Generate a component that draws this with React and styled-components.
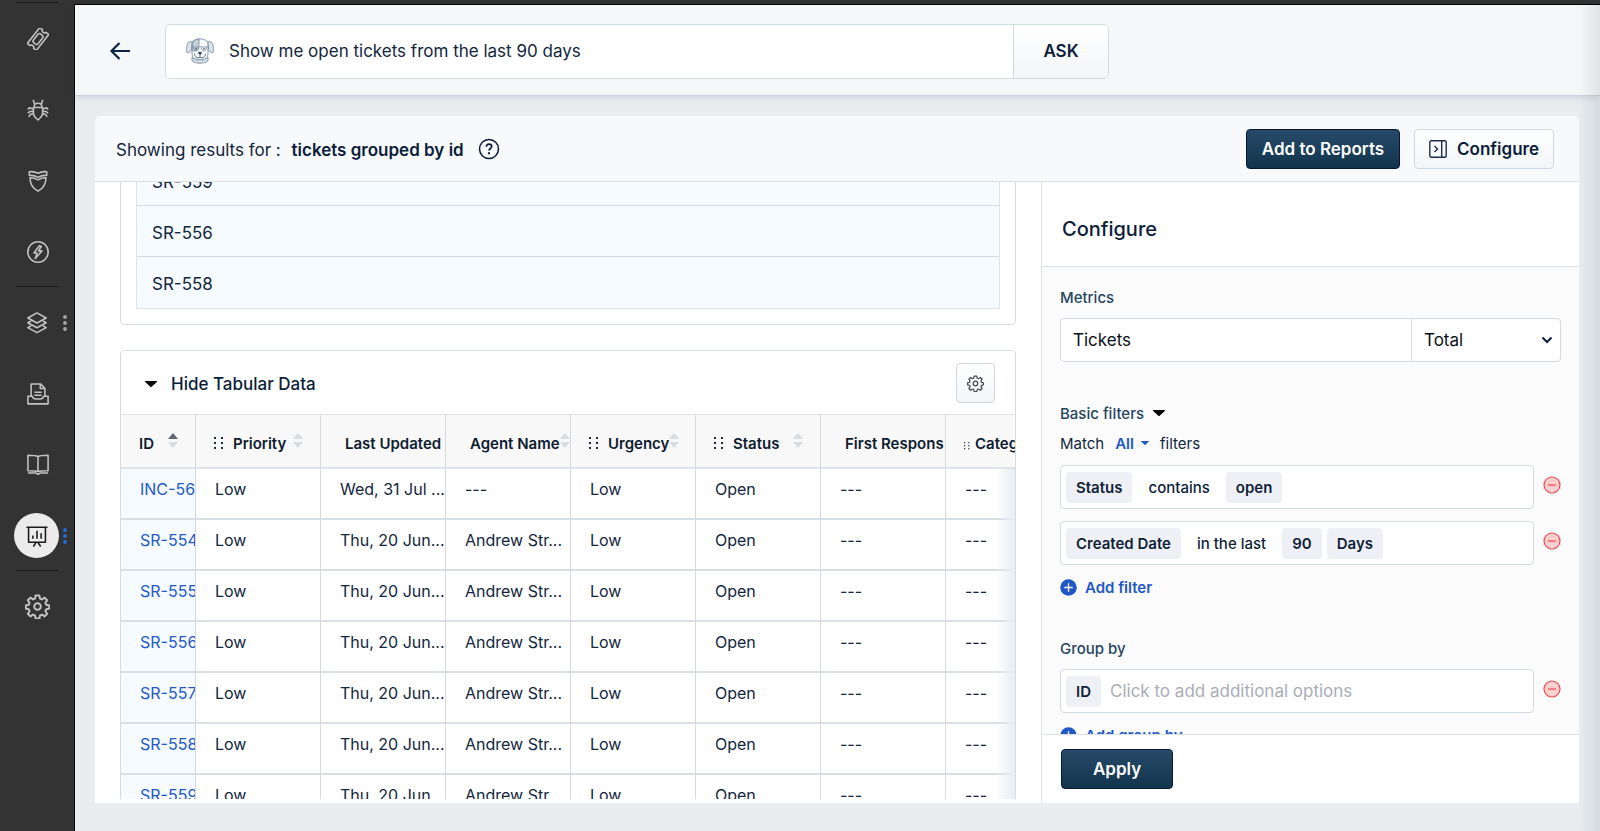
import React, { useLayoutEffect, useRef, useState } from "react";
import styled, { createGlobalStyle, css } from "styled-components";

const groupRows = ["SR-559", "SR-556", "SR-558"];

const columns = [
  { key: "id", label: "ID", width: 75, sort: "asc", pad: 18 },
  { key: "priority", label: "Priority", width: 125, grip: true, sort: "none", pad: 18 },
  { key: "updated", label: "Last Updated", width: 125, pad: 24 },
  { key: "agent", label: "Agent Name", width: 125, sort: "none", pad: 24 },
  { key: "urgency", label: "Urgency", width: 125, grip: true, sort: "none", pad: 18 },
  { key: "status", label: "Status", width: 125, grip: true, sort: "none", pad: 18 },
  { key: "response", label: "First Respons", width: 125, pad: 24 },
  { key: "category", label: "Category", width: 125, smallGrip: true, sort: "none", pad: 18 },
];

const makeTicket = (id, updated = "Thu, 20 Jun...", agent = "Andrew Str...") => ({
  id,
  priority: "Low",
  updated,
  agent,
  urgency: "Low",
  status: "Open",
  response: "---",
  category: "---",
});

const tickets = [
  makeTicket("INC-560", "Wed, 31 Jul ...", "---"),
  makeTicket("SR-554"),
  makeTicket("SR-555"),
  makeTicket("SR-556"),
  makeTicket("SR-557"),
  makeTicket("SR-558"),
  makeTicket("SR-559"),
  makeTicket("SR-560"),
  makeTicket("SR-561"),
];

const gearPath =
  "M10.2 1.5h3.6l.6 2.9 1.9.8 2.5-1.7 2.5 2.5-1.7 2.5.8 1.9 2.9.6v3l-2.9.6-.8 1.9 1.7 2.5-2.5 2.5-2.5-1.7-1.9.8-.6 2.9h-3.6l-.6-2.9-1.9-.8-2.5 1.7-2.5-2.5 1.7-2.5-.8-1.9-2.9-.6v-3l2.9-.6.8-1.9-1.7-2.5 2.5-2.5 2.5 1.7 1.9-.8z";

const GearIcon = ({ size, strokeWidth = 1.5 }) => (
  <Stroke width={size} height={size} viewBox="0 0 24 24" $weight={strokeWidth}>
    <path d={gearPath} />
    <circle cx="12" cy="12" r="3.2" />
  </Stroke>
);

const navItems = [
  {
    label: "Tickets",
    divider: true,
    icon: (
      <g transform="rotate(-52 12 12)">
        <path d="M1 5.800h22v3.700a2.600 2.600 0 0 0 0 5v3.700H1v-3.700a2.600 2.600 0 0 0 0-5z" />
        <rect x="6" y="8.800" width="12" height="6.400" rx="2" />
      </g>
    ),
  },
  {
    label: "Problems",
    icon: (
      <>
        <path d="M7 9.200h10v6.300c0 3-2.400 5.200-5 7.300-2.600-2.100-5-4.300-5-7.300z" />
        <path d="M7.500 9c.3-2.700 1.900-4.300 4.500-4.300s4.200 1.600 4.500 4.300" />
        <path d="M7 .800c0 2.300.6 4 2.200 4.600M17 .800c0 2.300-.6 4-2.200 4.600" />
        <path d="M7 11 2.500 9.500 1 11.500M7 13.500l-4 .2-2 1.800M7 16l-3.500 1L2 19.500M17 11l4.500-1.500 1.500 2M17 13.500l4 .2 2 1.800M17 16l3.500 1 1.500 2.500" />
      </>
    ),
  },
  {
    label: "Changes",
    icon: (
      <>
        <path d="M2.500 2c3.300-.6 6.500 0 9.500 1.500 3-1.500 6.200-2.100 9.500-1.500v4c-3.400-.5-6.500.3-9.500 2-3-1.700-6.100-2.500-9.500-2z" />
        <path d="M3.300 8.500c3-.2 6 .7 8.700 2.200 2.700-1.500 5.700-2.400 8.700-2.200 0 6.300-3 11.800-8.700 14.600-5.700-2.800-8.700-8.300-8.700-14.600z" />
      </>
    ),
  },
  {
    label: "Releases",
    icon: (
      <>
        <circle cx="12" cy="12" r="11.100" />
        <path d="m13.800 5-6.300 8h3.500L9 19.200l7.300-8.400h-3.700L15.500 6z" />
      </>
    ),
  },
  {
    label: "Assets",
    divider: true,
    dots: true,
    shift: true,
    icon: (
      <>
        <path d="m12 1 10 5.500-10 5.500L2 6.500z" />
        <path d="M5.500 9.800 2 11.700l10 5.500 10-5.500-3.500-1.900" />
        <path d="M5.500 15 2 17l10 5.500L22 17l-3.500-2" />
      </>
    ),
  },
  {
    label: "Requests",
    icon: (
      <>
        <path d="M4.500 14.500V1h10.200l4.800 4.800v8.700M14.500 1.300v4.700h4.800" />
        <path d="M1 14.500h4.700c.6 2 2 3 4 3h4.600c2 0 3.400-1 4-3H23v8.300H1z" />
        <path d="M8 10h8M8 13.300h8" />
      </>
    ),
  },
  {
    label: "Solutions",
    icon: (
      <>
        <path d="M12 2.800C9.800 1.300 6 1.300 1 1.300v16.900c5 0 8.800 0 11 1 2.200-1 6-1 11-1V1.300c-5 0-8.800 0-11 1.500zM12 2.800v16.300" />
        <path d="M1 20.800h8.700l2.300 1.500 2.300-1.500H23" />
      </>
    ),
  },
  {
    label: "Analytics",
    active: true,
    dots: true,
    shift: true,
    icon: (
      <>
        <path d="M.5 2.500h23M2.800 3v15.800h18.400V3" />
        <path d="M7.500 11.500V15M12 6.300V15M16.500 9v6M11 19l-3 4.500M13 19l3 4.500" />
      </>
    ),
  },
  { label: "Admin", divider: true, gear: true },
];

const DogIcon = () => (
  <svg width="28" height="26" viewBox="0 0 28 26" fill="none" stroke="#7f92a3" strokeWidth=".9">
    <path d="M6 4C8 2 11 .8 14 .8S20 2 22 4v11c0 5-3 8.500-8 8.500S6 20 6 15z" fill="#f8fafb" />
    <path d="M7 3.500c2-1.800 4-2.500 6-2.500-.2 3 .3 6.500-.8 9.500-1.500 2.500-4 3-6.200 2z" fill="#c5cfd8" />
    <path d="M6 4C3.800 3 2.200 3.800 1.300 6.500.700 9 .300 12 .800 14.300c2.500 1 4-.8 4.600-3.300z" fill="#dde3e9" />
    <path d="M22 4c2.200-1 3.800-.2 4.700 2.500.6 2.500 1 5.500.5 7.800-2.500 1-4-.8-4.600-3.300z" fill="#dde3e9" />
    <path d="M6.500 9h6c1-.5 2-.5 3 0h6M7.500 9.200c0 2.500 1 3.600 2.600 3.600s2.500-1.200 2.700-3.400M15.200 9.400c.2 2.200 1.100 3.400 2.700 3.400s2.600-1.100 2.600-3.600" />
    <path d="M9 10.800h2M17 10.800h2" stroke="#2f4559" />
    <path d="M12.300 14.700c1-.5 2.400-.5 3.400 0L14 16.800z" fill="#2f4559" stroke="#2f4559" />
    <path d="M14 17v2.300M8.500 15.500c0 3.500 3 5 5.500 3.800 2.500 1.200 5.500-.3 5.500-3.800" stroke="#4c6276" />
    <path d="M6 19c3 3.300 13 3.300 16 0v3.800c-3 3.200-13 3.200-16 0z" fill="#d3dbe1" />
    <path d="M11 22.500h1M16 22.500h1" />
  </svg>
);

const SortArrows = ({ active }) => (
  <SortSvg width="10" height="15" viewBox="0 0 10 15">
    <path d="M5 0l5 6H0z" fill={active ? "#5f6670" : "#d8dde2"} />
    <path d="M5 15l5-6H0z" fill="#d8dde2" />
  </SortSvg>
);

const Grip = ({ small }) => (
  <GripSvg
    width={small ? 6 : 10}
    height={small ? 8 : 13}
    viewBox="0 0 10 13"
    fill="#1d2c3f"
    $small={small}
  >
    {[0, 5, 10].map((y) => (
      <React.Fragment key={y}>
        <rect x="0" y={y} width="2" height="2" />
        <rect x="7" y={y} width="2" height="2" />
      </React.Fragment>
    ))}
  </GripSvg>
);

const Caret = ({ size = 12, color = "#05070a" }) => (
  <svg width={size} height={size / 2} viewBox="0 0 12 6" fill={color}>
    <path d="M.6 0h10.800c.6 0 .8.500.4.900L6.700 5.700a1 1 0 0 1-1.400 0L.2.900C-.2.500 0 0 .6 0z" />
  </svg>
);

const PlusBadge = () => (
  <svg width="17" height="17" viewBox="0 0 17 17">
    <circle cx="8.500" cy="8.500" r="8.300" fill="#2157c7" />
    <path d="M8.500 4.300v8.400M4.300 8.500h8.400" stroke="#fff" strokeWidth="1.300" />
  </svg>
);

const RemoveButton = ({ label }) => (
  <RemoveIconButton aria-label={label}>
    <svg width="18" height="18" viewBox="0 0 18 18" stroke="#f0494f" strokeWidth="1.200">
      <circle cx="9" cy="9" r="8" fill="#ffcfd0" />
      <path d="M5 9h8" />
    </svg>
  </RemoveIconButton>
);

const App = () => {
  const [question, setQuestion] = useState("Show me open tickets from the last 90 days");
  const [metric, setMetric] = useState("Tickets");
  const resultsRef = useRef(null);

  useLayoutEffect(() => {
    resultsRef.current.scrollTop = 69;
  }, []);

  return (
    <Shell>
      <GlobalStyle />
      <Sidebar>
        {navItems.map((item) => (
          <NavItem key={item.label} href="#" aria-label={item.label} $divider={item.divider}>
            <NavIcon $active={item.active} $shift={item.shift}>
              {item.gear ? (
                <GearIcon size={25} strokeWidth={1.900} />
              ) : (
                <Stroke width="22" height="22" viewBox="0 0 24 24" $weight={1.700}>
                  {item.icon}
                </Stroke>
              )}
            </NavIcon>
            {item.dots && (
              <NavDots width="4" height="16" viewBox="0 0 4 16" $active={item.active}>
                <circle cx="2" cy="2" r="1.900" />
                <circle cx="2" cy="8" r="1.900" />
                <circle cx="2" cy="14" r="1.900" />
              </NavDots>
            )}
          </NavItem>
        ))}
      </Sidebar>

      <Main>
        <TopBar>
          <BackButton aria-label="Back">
            <svg width="22" height="20" viewBox="0 0 22 20" fill="none" stroke="#0b2340" strokeWidth="2.200">
              <path d="M10.500 2 2.500 10l8 8M2.500 10H21" />
            </svg>
          </BackButton>
          <AskForm onSubmit={(e) => e.preventDefault()}>
            <DogIcon />
            <AskInput
              aria-label="Ask a question"
              value={question}
              onChange={(e) => setQuestion(e.target.value)}
            />
            <AskButton type="submit">ASK</AskButton>
          </AskForm>
        </TopBar>

        <Content>
          <ResultCard>
            <CardHeader>
              <ResultTitle>
                Showing results for : <strong>tickets grouped by id</strong>
              </ResultTitle>
              <IconButton aria-label="Help">
                <svg width="22" height="22" viewBox="0 0 22 22" fill="none" stroke="#0b1d3a" strokeWidth="1.500">
                  <circle cx="11" cy="11" r="9.500" />
                  <path d="M8.300 8.800c0-1.700 1.100-2.700 2.700-2.700s2.700 1 2.700 2.400c0 2-2.700 2-2.700 4.100" strokeWidth="1.700" />
                  <path d="M11 14.200v2" strokeWidth="2" />
                </svg>
              </IconButton>
              <Spacer />
              <PrimaryButton>Add to Reports</PrimaryButton>
              <SecondaryButton>
                <svg width="18" height="18" viewBox="0 0 18 18" fill="none" stroke="#1c2f47" strokeWidth="1.400">
                  <rect x=".8" y=".8" width="16.400" height="16.400" rx="1.500" />
                  <path d="M12.700 1v16M5.500 6l3 3-3 3" />
                </svg>
                Configure
              </SecondaryButton>
            </CardHeader>

            <Split>
              <Results ref={resultsRef}>
                <Panel $padded>
                  <GroupTable>
                    <tbody>
                      {groupRows.map((id) => (
                        <tr key={id}>
                          <td>{id}</td>
                        </tr>
                      ))}
                    </tbody>
                  </GroupTable>
                </Panel>

                <Panel>
                  <PanelHeader>
                    <ToggleButton>
                      <Caret />
                      Hide Tabular Data
                    </ToggleButton>
                    <GearButton aria-label="Table settings">
                      <GearIcon size={17} strokeWidth={1.800} />
                    </GearButton>
                  </PanelHeader>
                  <TableWrap>
                    <DataTable>
                      <colgroup>
                        {columns.map((col) => (
                          <Col key={col.key} $width={col.width} />
                        ))}
                      </colgroup>
                      <thead>
                        <tr>
                          {columns.map((col) => (
                            <th key={col.key}>
                              <HeadCell $pad={col.pad}>
                                {col.grip && <Grip />}
                                {col.smallGrip && <Grip small />}
                                <span>{col.label}</span>
                                {col.sort && <SortArrows active={col.sort === "asc"} />}
                              </HeadCell>
                            </th>
                          ))}
                        </tr>
                      </thead>
                      <tbody>
                        {tickets.map((ticket) => (
                          <tr key={ticket.id}>
                            {columns.map((col) => (
                              <td key={col.key}>
                                {col.key === "id" ? <a href="#">{ticket.id}</a> : ticket[col.key]}
                              </td>
                            ))}
                          </tr>
                        ))}
                      </tbody>
                    </DataTable>
                    <ScrollFade />
                  </TableWrap>
                </Panel>
              </Results>

              <ConfigPanel>
                <ConfigTitle>Configure</ConfigTitle>
                <ConfigBody>
                  <Section>
                    <SectionLabel as="label" htmlFor="metric">
                      Metrics
                    </SectionLabel>
                    <MetricBox>
                      <input id="metric" value={metric} onChange={(e) => setMetric(e.target.value)} />
                      <SelectWrap>
                        <select aria-label="Aggregation" defaultValue="Total">
                          <option>Total</option>
                          <option>Average</option>
                        </select>
                        <svg width="12" height="8" viewBox="0 0 12 8" fill="none" stroke="#0b1d3a" strokeWidth="2">
                          <path d="m1.500 1.500 4.500 4.500 4.500-4.500" />
                        </svg>
                      </SelectWrap>
                    </MetricBox>
                  </Section>

                  <Section>
                    <SectionLabel as="button">
                      Basic filters <Caret />
                    </SectionLabel>
                    <MatchRow>
                      Match
                      <LinkButton $tight>
                        All <Caret size={8} color="#2157c7" />
                      </LinkButton>
                      filters
                    </MatchRow>
                    <FieldRow>
                      <Field>
                        <Chip>Status</Chip>
                        <Operator>contains</Operator>
                        <Chip>open</Chip>
                      </Field>
                      <RemoveButton label="Remove status filter" />
                    </FieldRow>
                    <FieldRow>
                      <Field>
                        <Chip>Created Date</Chip>
                        <Operator>in the last</Operator>
                        <Chip>90</Chip>
                        <Chip>Days</Chip>
                      </Field>
                      <RemoveButton label="Remove created date filter" />
                    </FieldRow>
                    <LinkButton>
                      <PlusBadge /> Add filter
                    </LinkButton>
                  </Section>

                  <Section>
                    <SectionLabel as="label" htmlFor="group-by">
                      Group by
                    </SectionLabel>
                    <FieldRow>
                      <Field>
                        <Chip>ID</Chip>
                        <input id="group-by" placeholder="Click to add additional options" />
                      </Field>
                      <RemoveButton label="Remove group by" />
                    </FieldRow>
                    <LinkButton>
                      <PlusBadge /> Add group by
                    </LinkButton>
                  </Section>
                </ConfigBody>
                <ConfigFooter>
                  <PrimaryButton $wide>Apply</PrimaryButton>
                </ConfigFooter>
              </ConfigPanel>
            </Split>
          </ResultCard>
        </Content>
        <EdgeShade />
      </Main>
    </Shell>
  );
};

export default App;

const GlobalStyle = createGlobalStyle`
  * {
    box-sizing: border-box;
  }

  body {
    margin: 0;
    font-family: Inter, "Liberation Sans", sans-serif;
    font-size: 16px;
    color: #12263d;
    background: #e9edf0;
  }

  button,
  input,
  select {
    font: inherit;
    color: inherit;
    margin: 0;
  }

  button {
    cursor: pointer;
  }

  a {
    text-decoration: none;
  }
`;

const Stroke = styled.svg`
  fill: none;
  stroke: currentColor;
  stroke-width: ${({ $weight }) => $weight};
  stroke-linejoin: round;
`;

const Shell = styled.div`
  display: flex;
  height: 100vh;
  overflow: hidden;
  background: #333333;
`;

const Sidebar = styled.nav`
  flex: none;
  width: 74px;
  padding: 2px 15px 0 16px;
`;

const NavItem = styled.a`
  position: relative;
  display: flex;
  align-items: center;
  justify-content: center;
  height: 71px;
  padding-top: 1px;
  color: #c2c2c2;
  border-top: 1px solid ${({ $divider }) => ($divider ? "#1c1c1c" : "transparent")};
`;

const NavIcon = styled.span`
  display: flex;
  align-items: center;
  justify-content: center;
  flex: none;
  width: 45px;
  height: 45px;
  border-radius: 50%;
  ${({ $shift }) => $shift && "margin-right: 2px;"}
  ${({ $active }) =>
    $active &&
    css`
      background: #ebebeb;
      color: #1a1a1a;
    `}
`;

const NavDots = styled.svg`
  position: absolute;
  right: -8px;
  top: 28px;
  fill: ${({ $active }) => ($active ? "#1f6fe0" : "#a5a5a5")};
`;

const Main = styled.main`
  position: relative;
  flex: 1;
  min-width: 0;
  display: flex;
  flex-direction: column;
  margin-top: 4px;
  border-top: 1px solid #000;
  border-left: 1px solid #000;
  background: #e9edf0;
`;

const TopBar = styled.header`
  flex: none;
  display: flex;
  align-items: center;
  gap: 34px;
  height: 91px;
  padding: 2px 34px 0;
  background: #f6f7f9;
  border-bottom: 1px solid #cbd2dc;
  box-shadow: 0 2px 6px rgba(24, 50, 71, 0.12);
`;

const BackButton = styled.button`
  display: flex;
  padding: 0;
  border: 0;
  background: none;
`;

const AskForm = styled.form`
  flex: 0 1 944px;
  display: flex;
  align-items: center;
  height: 55px;
  padding-left: 20px;
  background: #fff;
  border: 1px solid #d3dae2;
  border-radius: 5px;
  overflow: hidden;
`;

const AskInput = styled.input`
  flex: 1;
  min-width: 0;
  padding: 0 15px;
  border: 0;
  outline: none;
  background: none;
  font-size: 17px;
`;

const AskButton = styled.button`
  align-self: stretch;
  width: 95px;
  border: 0;
  border-left: 1px solid #d3dae2;
  background: linear-gradient(#fff, #f3f5f7);
  font-size: 17px;
  font-weight: 600;
  color: #0b1d3a;
`;

const Content = styled.div`
  flex: 1;
  min-height: 0;
  display: flex;
  padding: 20px 21px 28px 20px;
`;

const ResultCard = styled.section`
  flex: 1;
  min-width: 0;
  display: flex;
  flex-direction: column;
  background: #fff;
  border-radius: 6px 6px 0 0;
  overflow: hidden;
`;

const CardHeader = styled.div`
  flex: none;
  display: flex;
  align-items: center;
  gap: 14px;
  height: 66px;
  padding: 0 25px 0 21px;
  background: #f8f9fb;
  border-bottom: 1px solid #dce1e6;
`;

const ResultTitle = styled.h1`
  margin: 2px 0 0;
  font-size: 17px;
  font-weight: 400;

  strong {
    margin-left: 6px;
    font-weight: 600;
    color: #0b1d3a;
  }
`;

const Spacer = styled.div`
  flex: 1;
`;

const IconButton = styled.button`
  display: flex;
  flex: none;
  padding: 0;
  border: 0;
  background: none;
`;

const RemoveIconButton = styled(IconButton)`
  margin-bottom: 4px;
`;

const buttonBase = css`
  display: flex;
  align-items: center;
  justify-content: center;
  gap: 10px;
  height: 40px;
  border-radius: 4px;
  font-size: 17px;
  font-weight: 600;
  white-space: nowrap;
`;

const PrimaryButton = styled.button`
  ${buttonBase}
  padding: 0 ${({ $wide }) => ($wide ? 31 : 15)}px;
  color: #fff;
  border: 1px solid #07182f;
  background: linear-gradient(#264a69, #12344d);
`;

const SecondaryButton = styled.button`
  ${buttonBase}
  padding: 0 14px;
  color: #0b1d3a;
  border: 1px solid #cfd7df;
  background: linear-gradient(#fff, #f3f5f7);
`;

const Split = styled.div`
  flex: 1;
  min-height: 0;
  display: flex;
`;

const Results = styled.div`
  flex: 1;
  min-width: 0;
  margin-bottom: 4px;
  padding: 24px 25px;
  overflow-y: auto;
  scrollbar-width: none;
`;

const Panel = styled.section`
  padding: ${({ $padded }) => ($padded ? "16px 15px 15px" : 0)};
  border: 1px solid #d5dbe3;
  border-radius: 4px;
  overflow: hidden;

  & + & {
    margin-top: 25px;
  }
`;

const GroupTable = styled.table`
  width: 100%;
  border: 1px solid #dfe4e8;
  border-collapse: separate;
  border-spacing: 0;
  background: #f5fbff;

  td {
    height: 51px;
    padding: 4px 15px 0;
    font-size: 17px;
    border-bottom: 1px solid #d5dbe1;
  }

  tr:last-child td {
    border-bottom-color: transparent;
  }
`;

const PanelHeader = styled.div`
  display: flex;
  align-items: center;
  justify-content: space-between;
  height: 64px;
  padding: 0 20px 0 24px;
  border-bottom: 1px solid #dfe3e7;
`;

const ToggleButton = styled.button`
  display: flex;
  align-items: center;
  gap: 14px;
  padding: 2px 0 0;
  border: 0;
  background: none;
  font-size: 17px;
  font-weight: 500;
  color: #0b1d3a;
`;

const GearButton = styled.button`
  display: flex;
  align-items: center;
  justify-content: center;
  width: 39px;
  height: 40px;
  padding: 2px 0 0;
  border: 1px solid #cfd7e0;
  border-radius: 4px;
  background: linear-gradient(#fff, #f3f5f7);
  color: #4a4f55;
`;

const TableWrap = styled.div`
  position: relative;
  overflow: hidden;
`;

const DataTable = styled.table`
  width: 950px;
  table-layout: fixed;
  border-collapse: separate;
  border-spacing: 0;

  th,
  td {
    padding: 0;
    border-right: 1px solid #d3d9e0;
    text-align: left;
    white-space: nowrap;
    overflow: hidden;
  }

  th {
    height: 54px;
    background: #f8f8f9;
    border-bottom: 2px solid #dfe3e7;
    font-size: 15px;
    font-weight: 600;
    color: #0e1c30;
  }

  td {
    height: 51px;
    padding: 0 0 9px 19px;
    border-bottom: 2px solid #d9dee3;
  }

  td:first-child {
    background: #f5fbff;
  }

  a {
    color: #2458c9;
  }
`;

const Col = styled.col`
  width: ${({ $width }) => $width}px;
`;

const HeadCell = styled.div`
  display: flex;
  align-items: center;
  padding: 4px 17px 0 ${({ $pad }) => $pad}px;

  span,
  svg {
    flex: none;
  }
`;

const GripSvg = styled.svg`
  margin: ${({ $small }) => ($small ? "6px 5px 0 0" : "0 9px 0 0")};
`;

const SortSvg = styled.svg`
  margin: 0 0 6px auto;
`;

const ScrollFade = styled.div`
  position: absolute;
  top: 54px;
  right: 0;
  bottom: 0;
  width: 20px;
  background: linear-gradient(to right, rgba(226, 234, 242, 0), #e6edf4);
  pointer-events: none;
`;

const ConfigPanel = styled.aside`
  flex: none;
  width: 538px;
  display: flex;
  flex-direction: column;
  border-left: 1px solid #dfe3e8;
`;

const ConfigTitle = styled.h2`
  flex: none;
  display: flex;
  align-items: center;
  height: 85px;
  margin: 0;
  padding: 10px 20px 0;
  font-size: 20px;
  font-weight: 500;
  color: #0b1d3a;
  border-bottom: 1px solid #d8dfe7;
`;

const ConfigBody = styled.div`
  flex: 1;
  min-height: 0;
  padding: 20px 18px;
  overflow-y: auto;
  scrollbar-width: none;
  background: #fbfbfb;
`;

const Section = styled.div`
  margin-bottom: 41px;
`;

const SectionLabel = styled.div`
  display: flex;
  align-items: center;
  gap: 9px;
  height: 20px;
  margin-bottom: 11px;
  padding: 0;
  border: 0;
  background: none;
  font-size: 15px;
  font-weight: 500;
  color: #264560;
`;

const MetricBox = styled.div`
  display: flex;
  height: 44px;
  background: #fff;
  border: 1px solid #d3dae2;
  border-radius: 4px;
  font-size: 17px;
  color: #0a0f16;

  input {
    flex: 1;
    min-width: 0;
    padding: 0 12px;
    border: 0;
    outline: none;
    background: none;
  }
`;

const SelectWrap = styled.div`
  position: relative;
  display: flex;
  align-items: center;
  width: 149px;
  border-left: 1px solid #d3dae2;

  select {
    width: 100%;
    height: 100%;
    padding: 0 12px;
    border: 0;
    outline: none;
    appearance: none;
    background: none;
  }

  svg {
    position: absolute;
    right: 7px;
    pointer-events: none;
  }
`;

const MatchRow = styled.div`
  display: flex;
  align-items: center;
  gap: 11px;
  height: 18px;
  margin-bottom: 13px;
  font-size: 15px;
`;

const LinkButton = styled.button`
  display: flex;
  align-items: center;
  gap: ${({ $tight }) => ($tight ? 7 : 8)}px;
  height: 20px;
  padding: 0;
  border: 0;
  background: none;
  font-size: 15px;
  font-weight: 600;
  color: #2157c7;
`;

const FieldRow = styled.div`
  display: flex;
  align-items: center;
  gap: 9px;
  margin-bottom: 12px;
`;

const Field = styled.div`
  flex: 1;
  min-width: 0;
  display: flex;
  align-items: center;
  gap: 5px;
  height: 44px;
  padding: 0 5px;
  background: #fff;
  border: 1px solid #d3dae2;
  border-radius: 4px;

  input {
    flex: 1;
    min-width: 0;
    padding: 0 4px;
    border: 0;
    outline: none;
    background: none;
    font-size: 17px;
  }

  input::placeholder {
    color: #a9adb5;
  }
`;

const Chip = styled.button`
  height: 31px;
  padding: 0 10px;
  border: 0;
  border-radius: 4px;
  background: #eff0f6;
  font-size: 15px;
  font-weight: 600;
  color: #0f1f38;
`;

const Operator = styled.span`
  padding: 0 11px;
  font-size: 15px;
  font-weight: 500;
  color: #0f1f38;
`;

const ConfigFooter = styled.div`
  flex: none;
  display: flex;
  align-items: center;
  height: 69px;
  padding: 0 19px;
  background: #fff;
  border-top: 1px solid #dbe0e6;
`;

const EdgeShade = styled.div`
  position: absolute;
  top: 0;
  right: 0;
  bottom: 0;
  width: 22px;
  background: linear-gradient(to right, rgba(60, 70, 80, 0), rgba(60, 70, 80, 0.11));
  pointer-events: none;
`;
